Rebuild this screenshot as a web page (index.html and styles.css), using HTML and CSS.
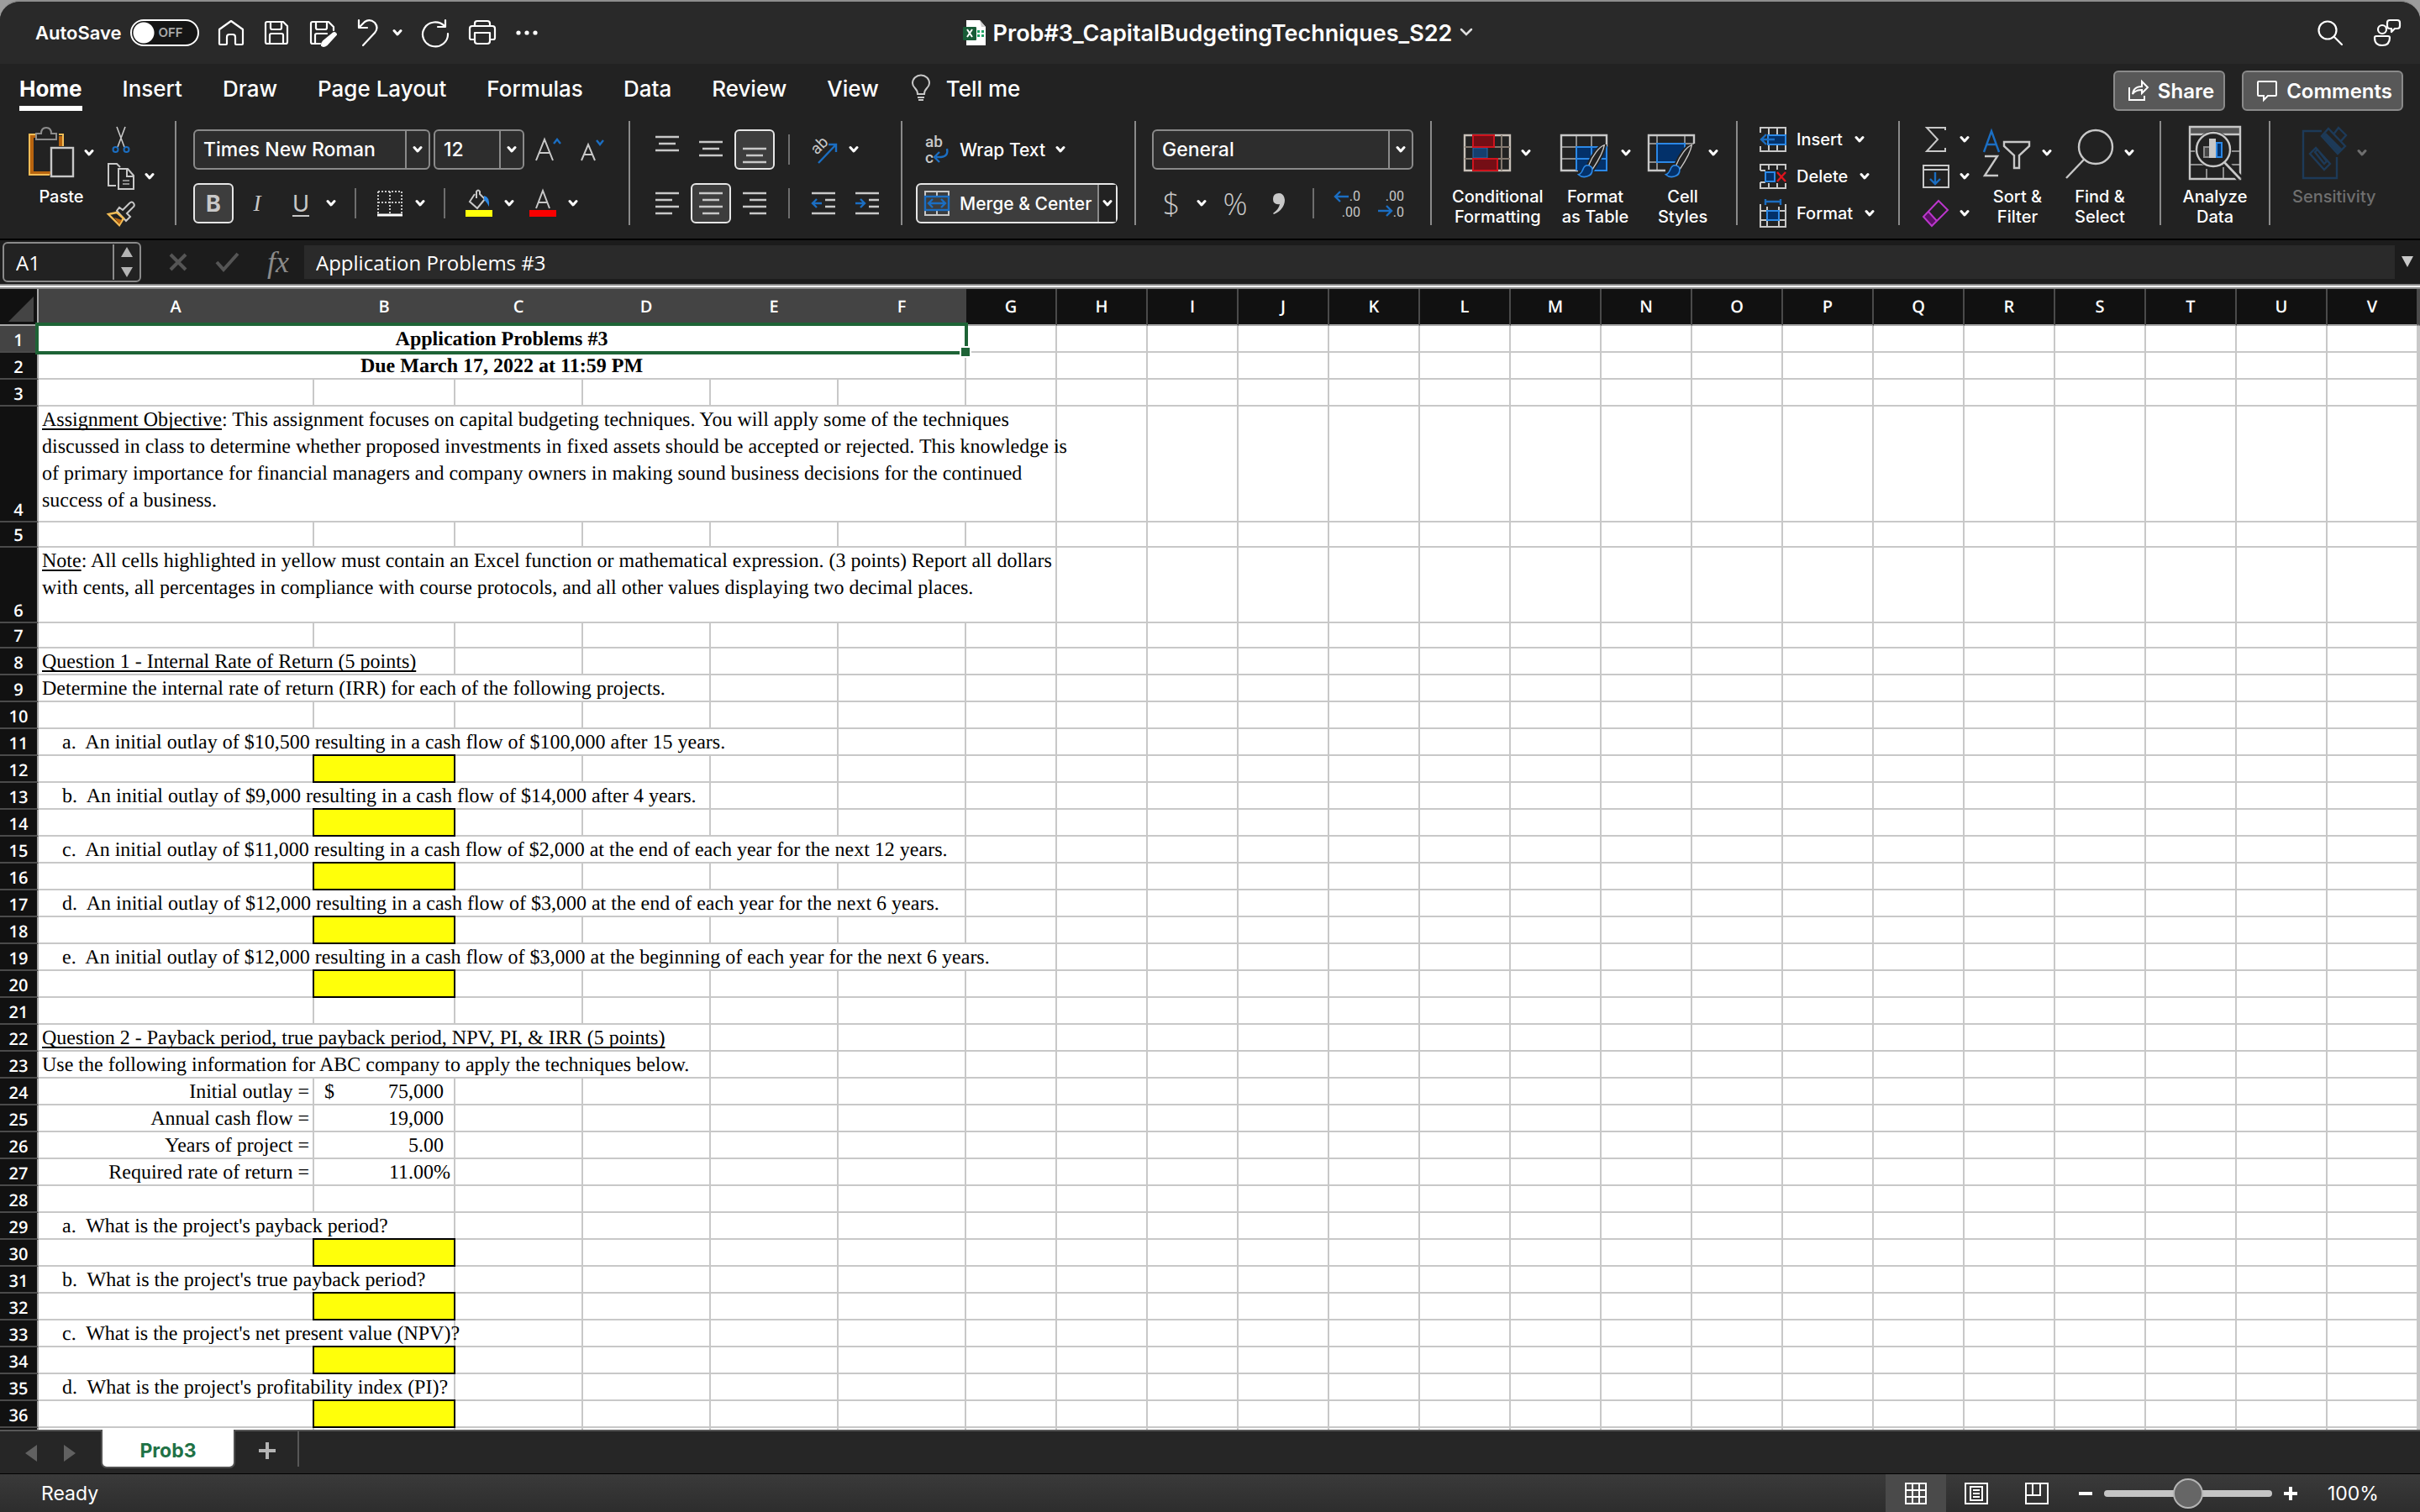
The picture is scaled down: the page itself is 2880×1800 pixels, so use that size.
FILE: index.html
```html
<!DOCTYPE html>
<html lang="en">
<head>
    <meta charset="UTF-8">
    <meta name="viewport" content="width=device-width, initial-scale=1.0">
    <title>Prob#3_CapitalBudgetingTechniques_S22</title>
    <link rel="stylesheet" href="styles.css">
</head>
<body>
    <svg class="defs" aria-hidden="true">
        <symbol id="chev" viewBox="0 0 12 10"><path d="M2 2.5l4 4.5 4-4.5" fill="none" stroke="currentColor" stroke-width="3" stroke-linecap="round" stroke-linejoin="round"/></symbol>
        <symbol id="brush" viewBox="0 0 48 64">
            <path d="M47 1C38 4 26 20 20 36l7 6C35 30 45 14 47 1z" fill="#222" stroke="#222" stroke-width="8"/>
            <path d="M47 1C38 4 26 20 20 36l7 6C35 30 45 14 47 1z" fill="#222" stroke="#c8c6c4" stroke-width="2"/>
            <path d="M17 36c-9 1-5 13-15 16 7 7 25 5 24-9 0-4-4-7-9-7z" fill="#03316a" stroke="#2b88e6" stroke-width="2.4"/>
        </symbol>
    </svg>

    <div class="window">
        <!-- Title bar -->
        <header class="titlebar">
            <div class="quick-access">
                <label class="autosave" for="autosave">AutoSave</label>
                <span class="toggle">
                    <input type="checkbox" id="autosave">
                    <span class="toggle-text">OFF</span>
                </span>
                <button class="quick" aria-label="Home">
                    <svg width="32" height="32" viewBox="0 0 32 32"><path d="M2 29V12L16 2l14 10v17q0 1-1 1h-7q-1 0-1-1v-8q0-3-3-3h-4q-3 0-3 3v8q0 1-1 1H3q-1 0-1-1z"/></svg>
                </button>
                <button class="quick" aria-label="Save">
                    <svg width="32" height="32" viewBox="0 0 32 32"><path d="M5 3h19l5 5v19q0 2-2 2H5q-2 0-2-2V5q0-2 2-2zM9 3v7q0 2 2 2h9q2 0 2-2V3M8 29V19q0-2 2-2h12q2 0 2 2v10"/></svg>
                </button>
                <button class="quick" aria-label="Save as">
                    <svg width="34" height="34" viewBox="0 0 34 34"><path d="M14 30H5q-2 0-2-2V6q0-2 2-2h19l6 6v4M9 4v7q0 2 2 2h9q2 0 2-2V4M8 30V20q0-2 2-2h12"/><path d="M29 18q3-2 4 1L22 31q-4 3-6 1 0-3 2-5z" fill="#fff"/></svg>
                </button>
                <button class="quick undo" aria-label="Undo">
                    <svg width="30" height="34" viewBox="0 0 30 34"><path d="M4 2v9h10M4 11L11 4q6-4 12 1 5 6 0 12L9 32"/></svg>
                    <svg class="chev" width="12" height="10"><use href="#chev"/></svg>
                </button>
                <button class="quick" aria-label="Redo">
                    <svg width="34" height="34" viewBox="0 0 34 34"><path d="M29 2v8h-9M28 9a15 14.500 0 1 0 4 9"/></svg>
                </button>
                <button class="quick" aria-label="Print">
                    <svg width="34" height="34" viewBox="0 0 34 34"><path d="M8 25H4q-2 0-2-2V12q0-3 3-3h24q3 0 3 3v11q0 2-2 2h-4M8 9V6q0-3 3-3h12q3 0 3 3v3M8 17h18v10q0 3-3 3H11q-3 0-3-3z"/></svg>
                </button>
                <button class="quick" aria-label="More">
                    <svg width="28" height="8" viewBox="0 0 28 8"><g fill="#fff" stroke="none"><circle cx="4" cy="4" r="2.600"/><circle cx="14" cy="4" r="2.600"/><circle cx="24" cy="4" r="2.600"/></g></svg>
                </button>
            </div>
            <h1 class="doc-title">
                <svg width="28" height="32" viewBox="0 0 28 32"><path d="M4 1h16l7 8v22H4z" fill="#fff"/><path d="M20 1l7 8h-5z" fill="#ccc"/><g fill="#21a366"><path d="M17 13h3v3h-3zM22 13h3v3h-3zM17 18h3v3h-3zM22 18h3v3h-3z"/></g><rect y="9" width="16" height="16" rx="1" fill="#185c37"/><path d="M5 12l6 9M11 12l-6 9" stroke="#fff" stroke-width="2"/></svg>
                <span>Prob#3_CapitalBudgetingTechniques_S22</span>
                <svg width="18" height="12" viewBox="0 0 18 12"><path d="M3 2l6 6 6-6" fill="none" stroke="#ddd" stroke-width="2.500" stroke-linecap="round"/></svg>
            </h1>
            <div class="title-right">
                <button class="quick" aria-label="Search">
                    <svg width="30" height="30" viewBox="0 0 30 30"><circle cx="12" cy="12" r="10.500"/><path d="M20 20l9 9"/></svg>
                </button>
                <button class="quick" aria-label="Presence">
                    <svg width="34" height="34" viewBox="0 0 34 34"><circle cx="11" cy="13" r="5"/><path d="M4 21h14q2 0 2 2 0 9-9 9t-9-9q0-2 2-2zM20 2h9q3 0 3 3v4q0 3-3 3h-3l-4 4v-4h-2q-3 0-3-3V5q0-3 3-3z"/></svg>
                </button>
            </div>
        </header>

        <!-- Ribbon tabs -->
        <nav class="tabs">
            <button class="tab active">Home</button>
            <button class="tab">Insert</button>
            <button class="tab">Draw</button>
            <button class="tab">Page Layout</button>
            <button class="tab">Formulas</button>
            <button class="tab">Data</button>
            <button class="tab">Review</button>
            <button class="tab">View</button>
            <button class="tab tell-me">
                <svg width="24" height="32" viewBox="0 0 24 32"><path d="M8 23q0-4-3-7-3-3-3-6a9.500 9 0 0 1 20 0q0 3-3 6-3 3-3 7zM8 27h8M9 30h6" fill="none" stroke="#c8c8c8" stroke-width="2"/></svg>
                Tell me
            </button>
            <div class="tab-actions">
                <button class="action">
                    <svg width="26" height="26" viewBox="0 0 26 26"><path d="M2 9v15h18v-5M6 17q1-9 11-9V2l7 7-7 7v-4q-8 0-11 5z" fill="none" stroke="#fff" stroke-width="2"/></svg>
                    Share
                </button>
                <button class="action">
                    <svg width="26" height="26" viewBox="0 0 26 26"><path d="M2 3q0-1 1-1h20q1 0 1 1v15q0 1-1 1h-9l-5 5v-5H3q-1 0-1-1z" fill="none" stroke="#fff" stroke-width="2"/></svg>
                    Comments
                </button>
            </div>
        </nav>

        <!-- Ribbon -->
        <section class="ribbon">
            <div class="group clipboard">
                <button class="big">
                    <span class="big-icon">
                        <svg width="54" height="64" viewBox="0 0 54 64"><path d="M10 12H4v44h22" fill="none" stroke="#b8640f" stroke-width="4"/><path d="M8 10H1v48h24M36 10h5v14" fill="none" stroke="#f3bd56" stroke-width="2"/><path d="M38 12v12" stroke="#b8640f" stroke-width="4"/><path d="M9 16V9h6q0-7 6-7t6 7h6v7z" fill="#222" stroke="#8c8c8c" stroke-width="2"/><rect x="27" y="26" width="26" height="34" fill="#222" stroke="#c8c8c8" stroke-width="2.400"/></svg>
                        <svg class="chev" width="12" height="10"><use href="#chev"/></svg>
                    </span>
                    <span>Paste</span>
                </button>
                <div class="stack">
                    <button class="small" aria-label="Cut">
                        <svg width="32" height="32" viewBox="0 0 32 32"><path d="M11 1l9 24M21 1l-9 24" stroke="#c8c8c8" stroke-width="1.600"/><g fill="none" stroke="#1b6ec2" stroke-width="2"><circle cx="9.500" cy="28" r="3"/><circle cx="22.500" cy="28" r="3"/></g></svg>
                    </button>
                    <button class="small" aria-label="Copy">
                        <svg width="32" height="32" viewBox="0 0 32 32"><path d="M10 27H1V1h10l4 4M13 7h11l7 8v16H13zM23 7v9h8" fill="none" stroke="#c8c8c8" stroke-width="2"/><path d="M18 21h8M18 25h8" stroke="#8c8c8c" stroke-width="2"/></svg>
                        <svg class="chev" width="12" height="10"><use href="#chev"/></svg>
                    </button>
                    <button class="small" aria-label="Format painter">
                        <svg width="32" height="32" viewBox="0 0 32 32"><path d="M18 12l8-8q3-3 5 0t-1 5l-7 7 4 4-5 5-11-12 3-4z" fill="none" stroke="#c8c8c8" stroke-width="2"/><path d="M11 15L1 17l13 13 5-8z" fill="none" stroke="#f3bd56" stroke-width="2.400"/><path d="M8 21l9 3-3 5z" fill="#b8640f"/></svg>
                    </button>
                </div>
            </div>

            <div class="group tools font">
                <div class="row">
                    <span class="combo wide">
                        <select aria-label="Font"><option>Times New Roman</option></select>
                        <svg class="chev" width="12" height="10"><use href="#chev"/></svg>
                    </span>
                    <span class="combo narrow">
                        <select aria-label="Font size"><option>12</option></select>
                        <svg class="chev" width="12" height="10"><use href="#chev"/></svg>
                    </span>
                    <button class="tool" aria-label="Increase font size"><svg width="32" height="32" viewBox="0 0 32 32"><path d="M2 29L12 4l10 25M6 20h12" fill="none" stroke="#c8c8c8" stroke-width="2"/><path d="M23 9l4-5 4 5" fill="none" stroke="#1b6ec2" stroke-width="2.400"/></svg></button>
                    <button class="tool" aria-label="Decrease font size"><svg width="32" height="32" viewBox="0 0 32 32"><path d="M4 29l8-19 8 19M7 22h10" fill="none" stroke="#c8c8c8" stroke-width="2"/><path d="M22 5l4 5 4-5" fill="none" stroke="#1b6ec2" stroke-width="2.400"/></svg></button>
                </div>
                <div class="row">
                    <button class="tool on letter bold">B</button>
                    <button class="tool letter italic">I</button>
                    <button class="split" aria-label="Underline"><span class="tool letter underline">U</span><svg class="chev" width="12" height="10"><use href="#chev"/></svg></button>
                    <i class="sep"></i>
                    <button class="split" aria-label="Borders"><span class="tool"><svg width="32" height="32" viewBox="0 0 32 32"><path d="M2 2h28M2 2v26M30 2v26M16 2v26M2 15h28" fill="none" stroke="#c8c8c8" stroke-width="2" stroke-dasharray="2 2"/><path d="M1 30h30" stroke="#fff" stroke-width="3"/></svg></span><svg class="chev" width="12" height="10"><use href="#chev"/></svg></button>
                    <i class="sep"></i>
                    <button class="split" aria-label="Fill color"><span class="tool"><svg width="32" height="32" viewBox="0 0 32 32"><path d="M11 5L5 14l9 8 9-11-6-6V2q-2-3-4 0v8" fill="none" stroke="#c8c8c8" stroke-width="2"/><path d="M22 7q7 1 6 13-3-6-6-8z" fill="#2b88e6"/><path d="M0 24h32v8H0z" fill="#ffff0a"/></svg></span><svg class="chev" width="12" height="10"><use href="#chev"/></svg></button>
                    <button class="split" aria-label="Font color"><span class="tool"><svg width="32" height="32" viewBox="0 0 32 32"><path d="M8 22l8-21 8 21M11 15h10" fill="none" stroke="#c8c8c8" stroke-width="2"/><path d="M0 24h32v8H0z" fill="#fa0000"/></svg></span><svg class="chev" width="12" height="10"><use href="#chev"/></svg></button>
                </div>
            </div>

            <div class="group tools align">
                <div class="row">
                    <button class="tool" aria-label="Top align"><svg class="lines" width="28" height="36" viewBox="0 0 28 36"><path d="M0 3h28M4 11h20M0 19h28"/></svg></button>
                    <button class="tool" aria-label="Middle align"><svg class="lines" width="28" height="36" viewBox="0 0 28 36"><path d="M0 9h28M4 17h20M0 25h28"/></svg></button>
                    <button class="tool on" aria-label="Bottom align"><svg class="lines" width="28" height="36" viewBox="0 0 28 36"><path d="M0 17h28M4 25h20M0 33h28"/></svg></button>
                    <i class="sep"></i>
                    <button class="split" aria-label="Orientation"><span class="tool"><svg width="36" height="36" viewBox="0 0 36 36"><text x="0" y="0" transform="translate(10 25) rotate(-45)" class="icon-text">ab</text><path d="M12 34L33 12M24 12h9v9" fill="none" stroke="#1b6ec2" stroke-width="2.400"/></svg></span><svg class="chev" width="12" height="10"><use href="#chev"/></svg></button>
                </div>
                <div class="row">
                    <button class="tool" aria-label="Align left"><svg class="lines" width="28" height="28" viewBox="0 0 28 28"><path d="M0 2h28M0 10h20M0 18h28M0 26h20"/></svg></button>
                    <button class="tool on" aria-label="Center"><svg class="lines" width="28" height="28" viewBox="0 0 28 28"><path d="M0 2h28M4 10h20M0 18h28M4 26h20"/></svg></button>
                    <button class="tool" aria-label="Align right"><svg class="lines" width="28" height="28" viewBox="0 0 28 28"><path d="M0 2h28M8 10h20M0 18h28M8 26h20"/></svg></button>
                    <i class="sep"></i>
                    <button class="tool" aria-label="Decrease indent"><svg class="lines" width="28" height="28" viewBox="0 0 28 28"><path d="M0 2h28M16 10h12M16 18h12M0 26h28"/><path class="blue" d="M12 14H1M6 9l-5 5 5 5"/></svg></button>
                    <button class="tool" aria-label="Increase indent"><svg class="lines" width="28" height="28" viewBox="0 0 28 28"><path d="M0 2h28M16 10h12M16 18h12M0 26h28"/><path class="blue" d="M0 14h11M6 9l5 5-5 5"/></svg></button>
                </div>
            </div>

            <div class="group tools wrap">
                <button class="text-tool">
                    <span class="tool"><svg width="32" height="36" viewBox="0 0 32 36"><text x="3" y="15" class="icon-text">ab</text><text x="3" y="34" class="icon-text">c</text><path d="M29 17q2 9-7 10h-6M20 21l-6 6 6 6" fill="none" stroke="#1b6ec2" stroke-width="2.400"/></svg></span>
                    Wrap Text
                    <svg class="chev" width="12" height="10"><use href="#chev"/></svg>
                </button>
                <button class="text-tool merge">
                    <span class="tool"><svg width="32" height="32" viewBox="0 0 32 32"><path d="M2 2h28v28H2zM16 2v5M16 25v5" fill="none" stroke="#c8c8c8" stroke-width="2"/><rect x="2" y="8" width="28" height="16" fill="#3d3d3d" stroke="#1b6ec2" stroke-width="2.400"/><path d="M6 16h20M11 11l-5 5 5 5M21 11l5 5-5 5" fill="none" stroke="#1b6ec2" stroke-width="2.400"/></svg></span>
                    <span class="merge-label">Merge &amp; Center</span>
                    <span class="merge-drop"><svg class="chev" width="12" height="10"><use href="#chev"/></svg></span>
                </button>
            </div>

            <div class="group tools number">
                <span class="combo">
                    <select aria-label="Number format"><option>General</option></select>
                    <svg class="chev" width="12" height="10"><use href="#chev"/></svg>
                </span>
                <div class="row">
                    <button class="split" aria-label="Currency"><span class="tool sign">$</span><svg class="chev" width="12" height="10"><use href="#chev"/></svg></button>
                    <button class="tool sign">%</button>
                    <button class="tool" aria-label="Comma style"><svg width="16" height="28" viewBox="0 0 16 28"><path d="M8 2q6 0 7 8 0 11-13 17l-1-1q7-5 8-11-8 1-8-6 0-7 7-7z" fill="#c8c8c8"/></svg></button>
                    <i class="sep"></i>
                    <button class="tool" aria-label="Increase decimal"><svg width="32" height="36" viewBox="0 0 32 36"><text x="31" y="15" class="digits">.0</text><text x="31" y="34" class="digits">.00</text><path d="M17 10H1M7 4L1 10l6 6" fill="none" stroke="#1b6ec2" stroke-width="2.400"/></svg></button>
                    <button class="tool" aria-label="Decrease decimal"><svg width="32" height="36" viewBox="0 0 32 36"><text x="31" y="15" class="digits">.00</text><text x="31" y="34" class="digits">.0</text><path d="M0 27h15M10 21l6 6-6 6" fill="none" stroke="#1b6ec2" stroke-width="2.400"/></svg></button>
                </div>
            </div>

            <div class="group styles">
                <button class="big">
                    <span class="big-icon">
                        <svg width="56" height="64" viewBox="0 0 56 64"><path d="M1 11h54v42H1z" fill="none" stroke="#c8c0b8" stroke-width="2.400"/><path d="M1 25h54M1 39h54M45 11v42" stroke="#83786e" stroke-width="2"/><path d="M11 26h17v12H11z" fill="#153f6e" stroke="#2b6cb0"/><path d="M11 11h25v14H11zM11 39h29v14H11z" fill="#750e15" stroke="#d0131d" stroke-width="2"/></svg>
                        <svg class="chev" width="12" height="10"><use href="#chev"/></svg>
                    </span>
                    <span>Conditional<br>Formatting</span>
                </button>
                <button class="big">
                    <span class="big-icon">
                        <svg width="60" height="64" viewBox="0 0 60 64"><path d="M19 11v42M37 11v14M1 25h54M1 39h18" stroke="#8c8c8c" stroke-width="2"/><path d="M55 25V11H1v42h20" fill="none" stroke="#c8c8c8" stroke-width="2.400"/><path d="M19 25h36v28H19z" fill="#03316a"/><path d="M19 53V25h36v28H34M19 39h36M37 25v28" fill="none" stroke="#2b88e6" stroke-width="2"/><use href="#brush" x="13" y="22" width="47" height="44"/></svg>
                        <svg class="chev" width="12" height="10"><use href="#chev"/></svg>
                    </span>
                    <span>Format<br>as Table</span>
                </button>
                <button class="big">
                    <span class="big-icon">
                        <svg width="60" height="64" viewBox="0 0 60 64"><path d="M11 11v42M44 11v10M1 21h54M1 43h18" stroke="#8c8c8c" stroke-width="2"/><path d="M55 21V11H1v42h20" fill="none" stroke="#c8c8c8" stroke-width="2.400"/><path d="M11 21h33v22H11z" fill="#03316a" stroke="#2b88e6" stroke-width="2"/><use href="#brush" x="13" y="22" width="47" height="44"/></svg>
                        <svg class="chev" width="12" height="10"><use href="#chev"/></svg>
                    </span>
                    <span>Cell<br>Styles</span>
                </button>
            </div>

            <div class="group stack cells">
                <button class="small">
                    <svg width="32" height="32" viewBox="0 0 32 32"><path d="M1 8V2h30v28H1v-6M11 2v8M21 2v8M11 22v8M21 22v8" fill="none" stroke="#c8c8c8" stroke-width="2"/><path d="M10 11h21v11H10z" fill="#03316a" stroke="#2b88e6" stroke-width="2"/><path d="M18 16H2M8 10l-6 6 6 6" fill="none" stroke="#1b6ec2" stroke-width="2.400"/></svg>
                    <span>Insert</span>
                    <svg class="chev" width="12" height="10"><use href="#chev"/></svg>
                </button>
                <button class="small">
                    <svg width="32" height="32" viewBox="0 0 32 32"><path d="M1 9V2h30v6M1 23v7h30v-6M1 9h6M1 23h6M11 2v6M21 2v6M11 24v6M21 24v6" fill="none" stroke="#c8c8c8" stroke-width="2"/><path d="M7 11h11v11H7z" fill="#03316a" stroke="#2b88e6" stroke-width="2"/><path d="M21 11l10 11M31 11L21 22" stroke="#e0131d" stroke-width="2.400"/></svg>
                    <span>Delete</span>
                    <svg class="chev" width="12" height="10"><use href="#chev"/></svg>
                </button>
                <button class="small">
                    <svg width="32" height="34" viewBox="0 0 32 34"><path d="M1 6v27h30V6M1 14h30M1 25h30M9 9v24M23 9v24" fill="none" stroke="#c8c8c8" stroke-width="2"/><path d="M9 14h14v11H9z" fill="#03316a" stroke="#2b88e6" stroke-width="2"/><path d="M7 0v7M25 0v7M7 3h18" stroke="#1b6ec2" stroke-width="2.400"/></svg>
                    <span>Format</span>
                    <svg class="chev" width="12" height="10"><use href="#chev"/></svg>
                </button>
            </div>

            <div class="group editing">
                <div class="stack">
                    <button class="small" aria-label="AutoSum">
                        <svg width="32" height="32" viewBox="0 0 32 32"><path d="M27 5V2H5l13 14L5 30h22v-4" fill="none" stroke="#c8c8c8" stroke-width="2"/></svg>
                        <svg class="chev" width="12" height="10"><use href="#chev"/></svg>
                    </button>
                    <button class="small" aria-label="Fill">
                        <svg width="32" height="32" viewBox="0 0 32 32"><path d="M1 3h30v26H1zM1 8h30" fill="none" stroke="#c8c8c8" stroke-width="2"/><path d="M15 11v14M9 19l6 6 6-6" fill="none" stroke="#1b6ec2" stroke-width="2.400"/></svg>
                        <svg class="chev" width="12" height="10"><use href="#chev"/></svg>
                    </button>
                    <button class="small" aria-label="Clear">
                        <svg width="32" height="32" viewBox="0 0 32 32"><path d="M7 15L1 21l10 10 6-6z" fill="#5c1066"/><path d="M19 1l11 11-19 19L1 20zM7 14l10 11" fill="none" stroke="#bb36cc" stroke-width="2"/></svg>
                        <svg class="chev" width="12" height="10"><use href="#chev"/></svg>
                    </button>
                </div>
                <button class="big">
                    <span class="big-icon">
                        <svg width="58" height="64" viewBox="0 0 58 64"><path d="M1 31l9-25 9 25M4 22h12" fill="none" stroke="#1b6ec2" stroke-width="2.400"/><path d="M2 36h15L2 59h16M25 19h30v5L43 35v15h-6V35L25 24z" fill="none" stroke="#c8c8c8" stroke-width="2.400"/></svg>
                        <svg class="chev" width="12" height="10"><use href="#chev"/></svg>
                    </span>
                    <span>Sort &amp;<br>Filter</span>
                </button>
                <button class="big">
                    <span class="big-icon">
                        <svg width="58" height="64" viewBox="0 0 58 64"><circle cx="36" cy="25" r="20" fill="none" stroke="#c8c8c8" stroke-width="2.400"/><path d="M22 40L1 62" stroke="#c8c8c8" stroke-width="2.400"/></svg>
                        <svg class="chev" width="12" height="10"><use href="#chev"/></svg>
                    </span>
                    <span>Find &amp;<br>Select</span>
                </button>
            </div>

            <div class="group analyze">
                <button class="big">
                    <span class="big-icon">
                        <svg width="64" height="66" viewBox="0 0 64 66"><path d="M2 2h60v9H2z" fill="#555"/><path d="M2 31h60M2 47h60M22 52v13M42 50v15" stroke="#8c8c8c" stroke-width="2"/><path d="M2 2h60v62H2zM2 11h60" fill="none" stroke="#c8c8c8" stroke-width="2.400"/><circle cx="30" cy="29" r="22" fill="#222"/><path d="M44 44l18 20" stroke="#222" stroke-width="8"/><path d="M19 26h7v12h-7z" fill="#444" stroke="#8c8c8c" stroke-width="2"/><path d="M34 21h6v17h-6z" fill="#03316a" stroke="#2b88e6" stroke-width="2"/><path d="M25 16h8v23h-8z" fill="#c8c8c8"/><circle cx="30" cy="29" r="20" fill="none" stroke="#c8c8c8" stroke-width="2.400"/><path d="M43 44l19 20" stroke="#c8c8c8" stroke-width="2.600"/></svg>
                    </span>
                    <span>Analyze<br>Data</span>
                </button>
            </div>

            <div class="group sensitivity">
                <button class="big" disabled>
                    <span class="big-icon">
                        <svg width="54" height="64" viewBox="0 0 54 64"><g fill="none" stroke="#1d3a58" stroke-width="2.400"><path d="M24 6H2v56h40V37M10 33l7-7 17 19-7 7zM16 31l3-3 11 14-3 3zM32 3L24 12l19 21 9-9zM38 10l6-8 9 9-7 8"/></g><path d="M25 12l4-4 20 20-5 5z" fill="#1d3a58"/></svg>
                        <svg class="chev" width="12" height="10"><use href="#chev"/></svg>
                    </span>
                    <span>Sensitivity</span>
                </button>
            </div>
        </section>

        <!-- Formula bar -->
        <section class="formula-bar">
            <div class="name-box">
                <input type="text" value="A1" aria-label="Name box">
                <span class="stepper">
                    <svg width="14" height="36" viewBox="0 0 14 36"><path d="M7 0l7 12H0zM0 24h14L7 36z" fill="#b4b4b4"/></svg>
                </span>
            </div>
            <div class="formula-tools">
                <button aria-label="Cancel"><svg width="24" height="24" viewBox="0 0 24 24"><path d="M3 3l18 18M21 3L3 21" stroke="#555" stroke-width="4"/></svg></button>
                <button aria-label="Enter"><svg width="30" height="24" viewBox="0 0 30 24"><path d="M2 12l8 9L27 2" fill="none" stroke="#555" stroke-width="4"/></svg></button>
                <button class="fx">fx</button>
            </div>
            <input class="formula" type="text" value="Application Problems #3" aria-label="Formula">
            <button class="expand" aria-label="Expand formula bar"><svg width="14" height="14" viewBox="0 0 14 14"><path d="M0 0h14L7 13z" fill="#c8c8c8"/></svg></button>
        </section>

        <!-- Worksheet, empty cells are filled in by the script below -->
        <main class="sheet">
            <table>
                <colgroup>
                    <col class="col-head"><col class="col-a"><col class="col-b">
                    <col class="col-mid" span="4"><col class="col-std" span="16"><col>
                </colgroup>
                <thead>
                    <tr>
                        <th class="corner"><svg width="30" height="30" viewBox="0 0 30 30"><path d="M30 0v30H0z" fill="#444"/></svg></th>
                        <th class="sel">A</th><th class="sel">B</th><th class="sel">C</th><th class="sel">D</th><th class="sel">E</th><th class="sel">F</th>
                        <th>G</th><th>H</th><th>I</th><th>J</th><th>K</th><th>L</th><th>M</th><th>N</th>
                        <th>O</th><th>P</th><th>Q</th><th>R</th><th>S</th><th>T</th><th>U</th><th>V</th><th></th>
                    </tr>
                </thead>
                <tbody>
                    <tr><th class="sel">1</th><td colspan="6" class="title active-cell">Application Problems #3</td></tr>
                    <tr><th>2</th><td colspan="6" class="title">Due March 17, 2022 at 11:59 PM</td></tr>
                    <tr><th>3</th></tr>
                    <tr class="tall"><th>4</th><td colspan="7" class="para"><u>Assignment Objective</u>: This assignment focuses on capital budgeting techniques. You will apply some of the techniques<br>discussed in class to determine whether proposed investments in fixed assets should be accepted or rejected. This knowledge is<br>of primary importance for financial managers and company owners in making sound business decisions for the continued<br>success of a business.</td></tr>
                    <tr class="short"><th>5</th></tr>
                    <tr class="medium"><th>6</th><td colspan="7" class="para"><u>Note</u>: All cells highlighted in yellow must contain an Excel function or mathematical expression. (3 points) Report all dollars<br>with cents, all percentages in compliance with course protocols, and all other values displaying two decimal places.</td></tr>
                    <tr class="short"><th>7</th></tr>
                    <tr><th>8</th><td colspan="2"><u>Question 1 - Internal Rate of Return (5 points)</u></td></tr>
                    <tr><th>9</th><td colspan="4">Determine the internal rate of return (IRR) for each of the following projects.</td></tr>
                    <tr><th>10</th></tr>
                    <tr><th>11</th><td colspan="5" class="item">a.&nbsp; An initial outlay of $10,500 resulting in a cash flow of $100,000 after 15 years.</td></tr>
                    <tr><th>12</th><td></td><td class="answer"></td></tr>
                    <tr><th>13</th><td colspan="4" class="item">b.&nbsp; An initial outlay of $9,000 resulting in a cash flow of $14,000 after 4 years.</td></tr>
                    <tr><th>14</th><td></td><td class="answer"></td></tr>
                    <tr><th>15</th><td colspan="6" class="item">c.&nbsp; An initial outlay of $11,000 resulting in a cash flow of $2,000 at the end of each year for the next 12 years.</td></tr>
                    <tr><th>16</th><td></td><td class="answer"></td></tr>
                    <tr><th>17</th><td colspan="6" class="item">d.&nbsp; An initial outlay of $12,000 resulting in a cash flow of $3,000 at the end of each year for the next 6 years.</td></tr>
                    <tr><th>18</th><td></td><td class="answer"></td></tr>
                    <tr><th>19</th><td colspan="7" class="item">e.&nbsp; An initial outlay of $12,000 resulting in a cash flow of $3,000 at the beginning of each year for the next 6 years.</td></tr>
                    <tr><th>20</th><td></td><td class="answer"></td></tr>
                    <tr><th>21</th></tr>
                    <tr><th>22</th><td colspan="4"><u>Question 2 - Payback period, true payback period, NPV, PI, &amp; IRR (5 points)</u></td></tr>
                    <tr><th>23</th><td colspan="4">Use the following information for ABC company to apply the techniques below.</td></tr>
                    <tr><th>24</th><td class="right">Initial outlay =</td><td class="money"><div><span>$</span><span>75,000</span></div></td></tr>
                    <tr><th>25</th><td class="right">Annual cash flow =</td><td class="right money">19,000</td></tr>
                    <tr><th>26</th><td class="right">Years of project =</td><td class="right money">5.00</td></tr>
                    <tr><th>27</th><td class="right">Required rate of return =</td><td class="right">11.00%</td></tr>
                    <tr><th>28</th></tr>
                    <tr><th>29</th><td colspan="2" class="item">a.&nbsp; What is the project's payback period?</td></tr>
                    <tr><th>30</th><td></td><td class="answer"></td></tr>
                    <tr><th>31</th><td colspan="2" class="item">b.&nbsp; What is the project's true payback period?</td></tr>
                    <tr><th>32</th><td></td><td class="answer"></td></tr>
                    <tr><th>33</th><td colspan="2" class="item">c.&nbsp; What is the project's net present value (NPV)?</td></tr>
                    <tr><th>34</th><td></td><td class="answer"></td></tr>
                    <tr><th>35</th><td colspan="2" class="item">d.&nbsp; What is the project's profitability index (PI)?</td></tr>
                    <tr><th>36</th><td></td><td class="answer"></td></tr>
                    <tr><th></th></tr>
                </tbody>
            </table>
        </main>

        <!-- Sheet tabs -->
        <section class="sheet-tabs">
            <button class="arrow" aria-label="Previous sheet"><svg width="14" height="20" viewBox="0 0 14 20"><path d="M14 0v20L0 10z" fill="#616161"/></svg></button>
            <button class="arrow" aria-label="Next sheet"><svg width="14" height="20" viewBox="0 0 14 20"><path d="M0 0v20l14-10z" fill="#616161"/></svg></button>
            <button class="sheet-tab">Prob3</button>
            <button class="add-sheet" aria-label="New sheet"><svg width="20" height="20" viewBox="0 0 20 20"><path d="M10 0v20M0 10h20" stroke="#b4b4b4" stroke-width="4"/></svg></button>
        </section>

        <!-- Status bar -->
        <footer class="status">
            <span>Ready</span>
            <div class="status-right">
                <button class="view on" aria-label="Normal view"><svg width="26" height="26" viewBox="0 0 26 26"><path d="M1 1h24v24H1zM9 1v24M17 1v24M1 9h24M1 17h24"/></svg></button>
                <button class="view" aria-label="Page layout view"><svg width="28" height="26" viewBox="0 0 28 26"><path d="M1 1h26v24H1zM7 5h14v16H7zM10 9h8M10 13h8M10 17h8"/></svg></button>
                <button class="view" aria-label="Page break view"><svg width="28" height="26" viewBox="0 0 28 26"><path d="M1 1h26v24H1zM1 15h17V1M9 1v14"/></svg></button>
                <button class="zoom-btn" aria-label="Zoom out"><svg width="16" height="16" viewBox="0 0 16 16"><path d="M0 8h16" stroke="#fff" stroke-width="4"/></svg></button>
                <input class="zoom" type="range" min="0" max="100" value="50" aria-label="Zoom">
                <button class="zoom-btn" aria-label="Zoom in"><svg width="16" height="16" viewBox="0 0 16 16"><path d="M0 8h16M8 0v16" stroke="#fff" stroke-width="4"/></svg></button>
                <span class="zoom-value">100%</span>
            </div>
        </footer>
    </div>

    <script>
        const columnCount = 24;

        // pad every row with empty cells so the grid reaches the right edge
        document.querySelectorAll('.sheet tbody tr').forEach(row => {
            let used = 0;
            Array.from(row.cells).forEach(cell => used += cell.colSpan);
            for (; used < columnCount; used++) {
                row.appendChild(document.createElement('td'));
            }
        });
    </script>
</body>
</html>
```
FILE: styles.css
```css
*, *::before, *::after {
    box-sizing: border-box;
}
body {
    margin: 0;
    height: 100vh;
    background-color: #9c9c9c;
    color: white;
    font-family: Inter, "Liberation Sans", sans-serif;
    font-size: 20px;
}
button, select, input {
    font: inherit;
    color: inherit;
    margin: 0;
    padding: 0;
    border: none;
    background: none;
}
svg {
    flex: none;
    overflow: visible;
}
.defs {
    position: absolute;
    width: 0;
    height: 0;
}
.window {
    height: 100vh;
    display: flex;
    flex-direction: column;
    border-top: 2px solid #8e8e8e;
    border-radius: 24px 24px 0 0;
    overflow: hidden;
    background-color: #222;
}

/* title bar */
.titlebar {
    height: 74px;
    flex: none;
    display: grid;
    grid-template-columns: 1fr auto 1fr;
    align-items: center;
    background-color: #292929;
    padding: 0 22px 0 42px;
}
.quick-access {
    display: flex;
    align-items: center;
    gap: 22px;
}
.autosave {
    font-size: 22px;
    font-weight: 600;
}
.toggle {
    position: relative;
    display: flex;
    margin-left: -12px;
}
.toggle input {
    appearance: none;
    width: 82px;
    height: 32px;
    border: 2px solid #fff;
    border-radius: 16px;
    background: radial-gradient(circle at 14px 14px, #fff 12px, #151515 13px);
}
.toggle-text {
    position: absolute;
    left: 34px;
    top: 0;
    line-height: 32px;
    font-size: 15px;
    font-weight: 600;
    color: #a8a8a8;
    pointer-events: none;
}
.quick {
    display: flex;
    align-items: center;
    gap: 14px;
}
.quick svg:not(.chev) {
    fill: none;
    stroke: #fff;
    stroke-width: 2.2;
    stroke-linejoin: round;
    stroke-linecap: round;
}
.doc-title {
    margin: 0;
    display: flex;
    align-items: center;
    gap: 8px;
    font-size: 27px;
    font-weight: 600;
}
.title-right {
    display: flex;
    justify-content: flex-end;
    align-items: center;
    gap: 36px;
}

/* ribbon tabs */
.tabs {
    flex: none;
    height: 68px;
    display: flex;
    align-items: flex-start;
    gap: 48px;
    padding: 8px 20px 0 23px;
}
.tab {
    height: 48px;
    font-size: 26px;
    font-weight: 500;
    border-bottom: 6px solid transparent;
}
.tab.active {
    font-weight: 700;
    border-image: linear-gradient(#fff, #fff) 1;
}
.tell-me {
    display: flex;
    align-items: center;
    gap: 18px;
    margin-left: -10px;
}
.tab-actions {
    margin-left: auto;
    display: flex;
    gap: 20px;
}
.action {
    height: 48px;
    display: flex;
    align-items: center;
    gap: 10px;
    padding: 0 11px 0 15px;
    border: 2px solid #8a8a8a;
    border-radius: 6px;
    background-color: #585858;
    font-size: 24px;
    font-weight: 600;
}

/* ribbon */
.ribbon {
    flex: none;
    height: 142px;
    display: flex;
    align-items: flex-start;
    border-bottom: 2px solid #000;
}
.group {
    height: 124px;
    display: flex;
    flex: none;
    border-right: 2px solid #8a8a8a;
}
.tools {
    flex-direction: column;
    padding-top: 10px;
    gap: 16px;
}
.clipboard {
    width: 210px;
    padding-left: 34px;
    gap: 16px;
}
.font {
    width: 540px;
    padding-left: 20px;
}
.align {
    width: 324px;
    padding-left: 20px;
}
.wrap {
    width: 278px;
    padding-left: 16px;
}
.number {
    width: 352px;
    padding: 10px 20px 0 18px;
}
.styles {
    width: 364px;
    padding-left: 24px;
    gap: 20px;
}
.cells {
    width: 193px;
    padding-left: 26px;
}
.editing {
    width: 311px;
    padding-left: 27px;
    gap: 16px;
}
.analyze {
    width: 130px;
    justify-content: center;
}
.sensitivity {
    padding-left: 26px;
    border-right: none;
}
.row {
    display: flex;
    gap: 4px;
}
.tool {
    width: 48px;
    height: 48px;
    display: flex;
    align-items: center;
    justify-content: center;
}
.tool.on, .merge {
    border: 2px solid #e6e6e6;
    border-radius: 6px;
    background-color: #3d3d3d;
}
.split {
    display: flex;
    align-items: center;
}
.split .chev {
    margin: 0 6px;
}
.sep {
    width: 2px;
    height: 36px;
    margin: 6px 12px;
    background-color: #6e6e6e;
}
.letter {
    font-size: 27px;
    color: #c8c8c8;
}
.bold {
    font-weight: 700;
}
.italic {
    font-family: "Liberation Serif", serif;
    font-style: italic;
}
.underline {
    text-decoration: underline;
    text-decoration-thickness: 2px;
    text-underline-offset: 4px;
}
.sign {
    font-family: "Open Sans", sans-serif;
    font-size: 36px;
    font-weight: 300;
    color: #c8c8c8;
}
.lines {
    fill: none;
    stroke: #c8c8c8;
    stroke-width: 2.4;
}
.lines .blue {
    stroke: #1b6ec2;
}
.icon-text {
    font-family: Roboto, sans-serif;
    font-size: 19px;
    line-height: 18px;
    fill: #c8c8c8;
}
.digits {
    font-family: Roboto, sans-serif;
    font-size: 16px;
    fill: #c8c8c8;
    text-anchor: end;
}
.combo {
    height: 48px;
    display: flex;
    align-items: center;
    border: 2px solid #8a8a8a;
    border-radius: 6px;
    background-color: #2d2d2d;
}
.combo select {
    flex: 1;
    min-width: 0;
    height: 44px;
    appearance: none;
    padding-left: 10px;
    font-size: 23px;
    font-weight: 500;
    border-right: 2px solid #8a8a8a;
}
.combo .chev {
    margin: 0 7px;
}
.number .combo {
    margin-left: 1px;
}
.combo.wide {
    width: 282px;
}
.combo.narrow {
    width: 108px;
}
.text-tool {
    height: 48px;
    display: flex;
    align-items: center;
    font-size: 21px;
    font-weight: 500;
    gap: 4px;
}
.text-tool > .chev {
    margin-left: 8px;
}
.merge {
    width: 240px;
}
.merge .tool {
    width: 46px;
}
.merge-label {
    flex: 1;
    white-space: nowrap;
    text-align: left;
}
.merge-drop {
    width: 22px;
    height: 44px;
    display: flex;
    align-items: center;
    justify-content: center;
    border-left: 2px solid #8a8a8a;
    background-color: #222;
}
.big {
    min-width: 82px;
    align-self: flex-start;
    padding-top: 6px;
    display: flex;
    flex-direction: column;
    align-items: center;
    gap: 8px;
    font-size: 20px;
    line-height: 24px;
    font-weight: 500;
}
.clipboard .big {
    min-width: 76px;
}
.big:disabled {
    color: #6f6f6f;
}
.big-icon {
    height: 64px;
    display: flex;
    align-items: center;
    gap: 12px;
}
.stack {
    display: flex;
    flex-direction: column;
    gap: 12px;
    padding-top: 6px;
}
.small {
    height: 32px;
    display: flex;
    align-items: center;
    gap: 12px;
    font-weight: 500;
}
.cells .chev {
    margin-left: 2px;
}

/* formula bar */
.formula-bar {
    flex: none;
    height: 58px;
    display: flex;
    align-items: center;
    padding: 0 8px 6px 3px;
    background: linear-gradient(to top, #8a8a8a 2px, #fff 2px 4px, #8a8a8a 4px 6px, #1c1c1c 6px);
    font-family: "Open Sans", sans-serif;
    font-size: 24px;
    font-weight: 500;
}
.name-box {
    width: 165px;
    height: 48px;
    display: flex;
    align-items: center;
    border: 2px solid #8a8a8a;
    border-radius: 6px;
    background-color: #222;
}
.name-box input {
    flex: 1;
    min-width: 0;
    padding-left: 14px;
}
.stepper {
    height: 42px;
    display: flex;
    align-items: center;
    padding: 0 8px;
    border-left: 2px solid #8a8a8a;
}
.formula-tools {
    display: flex;
    align-items: center;
    gap: 32px;
    padding: 0 18px 0 32px;
}
.formula-tools button {
    display: flex;
}
.fx {
    font-family: "Liberation Serif", serif;
    font-style: italic;
    font-size: 36px;
    line-height: 44px;
    color: #8a8a8a;
}
.formula {
    flex: 1;
    height: 40px;
    padding-left: 14px;
    background-color: #2a2a2a;
}
.expand {
    display: flex;
    padding-left: 8px;
}

/* worksheet */
.sheet {
    flex: 1;
    min-height: 0;
    overflow: hidden;
    background-color: #fff;
    color: #000;
    font-family: "Liberation Serif", "Times New Roman", serif;
    font-size: 24px;
    line-height: 28px;
    text-rendering: geometricPrecision;
}
.sheet table {
    width: 100%;
    table-layout: fixed;
    border-collapse: separate;
    border-spacing: 0;
}
.col-head {
    width: 46px;
}
.col-a {
    width: 328px;
}
.col-b {
    width: 168px;
}
.col-mid {
    width: 152px;
}
.col-std {
    width: 108px;
}
.sheet th {
    padding: 0;
    background-color: #111;
    color: #fff;
    font-family: "Open Sans", sans-serif;
    font-size: 20px;
    line-height: 26px;
    font-weight: 600;
    vertical-align: bottom;
    border-right: 2px solid #a8a8a8;
    border-bottom: 2px solid #4a4a4a;
}
.sheet thead th {
    height: 44px;
    vertical-align: middle;
    border-right-color: #4a4a4a;
    border-bottom-color: #a8a8a8;
}
.sheet thead .corner {
    padding: 6px 4px 0 10px;
    line-height: 0;
    border-right-color: #a8a8a8;
}
.sheet th.sel {
    background-color: #444;
}
.sheet thead th.sel {
    border-right-color: #444;
}
.sheet tbody tr {
    height: 32px;
}
.sheet tbody .short {
    height: 30px;
}
.sheet tbody .medium {
    height: 90px;
}
.sheet tbody .tall {
    height: 138px;
}
.sheet td {
    padding: 0 4px;
    white-space: nowrap;
    vertical-align: bottom;
    border-right: 2px solid #c8c8c8;
    border-bottom: 2px solid #c8c8c8;
}
.sheet td.title {
    text-align: center;
    font-weight: 700;
}
.sheet td.para {
    line-height: 32px;
    vertical-align: top;
}
.sheet td.item {
    padding-left: 28px;
}
.sheet td.right {
    text-align: right;
}
.sheet td.money {
    padding: 0 12px;
}
.money div {
    display: flex;
    justify-content: space-between;
}
.sheet u {
    text-decoration-thickness: 2px;
    text-underline-offset: 3px;
    text-decoration-skip-ink: none;
}
.active-cell, .answer {
    position: relative;
}
.active-cell::before {
    content: "";
    position: absolute;
    inset: -4px;
    border: 4px solid #1e6336;
}
.active-cell::after {
    content: "";
    position: absolute;
    right: -8px;
    bottom: -8px;
    width: 14px;
    height: 14px;
    border: 2px solid #fff;
    background-color: #1e6336;
}
.answer {
    background-color: #ffff0a;
}
.answer::after {
    content: "";
    position: absolute;
    inset: -2px;
    border: 2px solid #000;
}

/* sheet tabs */
.sheet-tabs {
    flex: none;
    height: 53px;
    display: flex;
    align-items: flex-start;
    border-top: 2px solid #575757;
    border-bottom: 1px solid #000;
    background-color: #262626;
}
.arrow {
    padding: 16px 0 0 30px;
}
.arrow + .arrow {
    padding-left: 32px;
}
.sheet-tab {
    width: 156px;
    height: 44px;
    margin: -2px 0 0 32px;
    padding-top: 6px;
    border-radius: 0 0 5px 5px;
    background-color: #fff;
    box-shadow: 0 0 0 2px #505050;
    clip-path: inset(0 -2px -2px -2px);
    color: #1f7246;
    font-size: 23px;
    font-weight: 700;
}
.add-sheet {
    height: 42px;
    padding: 8px 26px 0 30px;
    border-right: 2px solid #575757;
}

/* status bar */
.status {
    flex: none;
    height: 45px;
    display: flex;
    justify-content: space-between;
    align-items: center;
    padding-left: 49px;
    background: linear-gradient(#3a3a3a, #2d2d2d);
    font-size: 23px;
}
.status-right {
    display: flex;
    align-items: center;
}
.view {
    width: 72px;
    height: 46px;
    display: flex;
    align-items: center;
    justify-content: center;
}
.view.on {
    background-color: #4a4a4a;
}
.view svg {
    fill: none;
    stroke: #fff;
    stroke-width: 2;
}
.zoom-btn {
    display: flex;
    padding: 0 14px;
}
.zoom {
    appearance: none;
    width: 200px;
    height: 8px;
    border-radius: 4px;
    background-color: #c4c4c4;
}
.zoom::-webkit-slider-thumb {
    appearance: none;
    width: 36px;
    height: 36px;
    border: 2px solid #b4b4b4;
    border-radius: 50%;
    background-color: #666;
}
.zoom-value {
    width: 132px;
    padding-left: 22px;
}
```
